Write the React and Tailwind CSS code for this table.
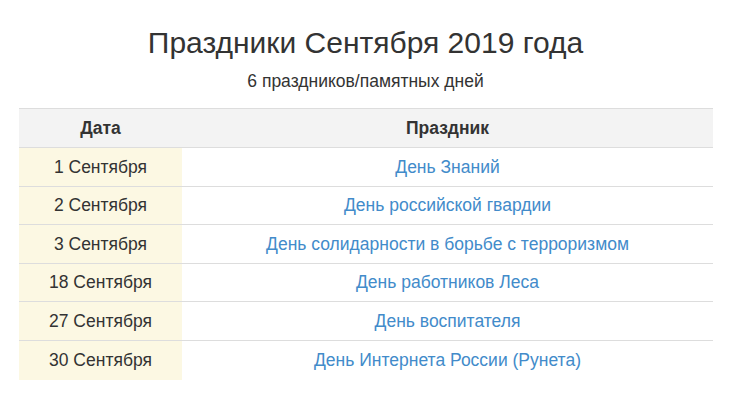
import React from 'react';

const holidays = [
  { date: '1 Сентября', name: 'День Знаний' },
  { date: '2 Сентября', name: 'День российской гвардии' },
  { date: '3 Сентября', name: 'День солидарности в борьбе с терроризмом' },
  { date: '18 Сентября', name: 'День работников Леса' },
  { date: '27 Сентября', name: 'День воспитателя' },
  { date: '30 Сентября', name: 'День Интернета России (Рунета)' },
];

const App = () => {
  return (
    <div className="min-h-[402px] bg-white pt-[26px] text-[#333] font-['Liberation_Sans',Arial,sans-serif]">
      <h1 className="text-center text-[30px] leading-[33px] font-normal">Праздники Сентября 2019 года</h1>
      <p className="mt-[11px] text-center text-[17.5px] leading-[23px]">6 праздников/памятных дней</p>
      <div className="ml-[19px] mt-[15px] w-[694px] text-[17.5px]">
        <div className="flex h-[40px] items-center border-y border-[#dddddd] bg-[#f3f3f3] font-bold">
          <div className="w-[163px] text-center">Дата</div>
          <div className="flex-1 text-center">Праздник</div>
        </div>
        {holidays.map((h, i) => (
          <div
            key={h.date}
            className={`flex h-[38.6px] ${i < holidays.length - 1 ? 'border-b border-[#dddddd]' : ''}`}
          >
            <div className="flex w-[163px] items-center justify-center bg-[#fcf8e3]">{h.date}</div>
            <div className="flex flex-1 items-center justify-center">
              <a href="#" className="text-[#428bca]">{h.name}</a>
            </div>
          </div>
        ))}
      </div>
    </div>
  );
};

export default App;
